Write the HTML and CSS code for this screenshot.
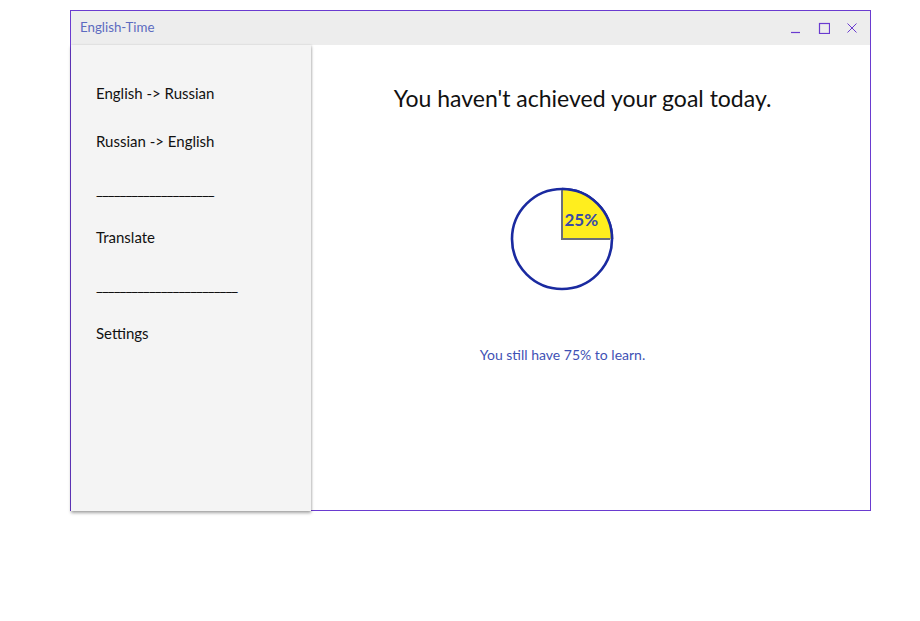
FILE: index.html
```html
<!DOCTYPE html>
<html>
<head>
<meta charset="utf-8">
<link rel="stylesheet" href="styles.css">
</head>
<body>
<div class="window">
  <div class="titlebar">
    <span class="title">English-Time</span>
    <div class="controls">
      <svg class="ctl" width="12" height="12" viewBox="0 0 12 12"><path d="M1 10.5 H10" stroke="#6a3bd0" stroke-width="1.2"/></svg>
      <svg class="ctl" width="12" height="12" viewBox="0 0 12 12"><rect x="1.5" y="1.5" width="10" height="10" fill="none" stroke="#6a3bd0" stroke-width="1.2"/></svg>
      <svg class="ctl" width="12" height="12" viewBox="0 0 12 12"><path d="M1.5 1.5 L10.5 10.5 M10.5 1.5 L1.5 10.5" stroke="#6a3bd0" stroke-width="1"/></svg>
    </div>
  </div>
  <div class="body">
    <nav class="sidebar">
      <div class="item">English -&gt; Russian</div>
      <div class="item">Russian -&gt; English</div>
      <div class="item sep">____________________</div>
      <div class="item">Translate</div>
      <div class="item sep">________________________</div>
      <div class="item">Settings</div>
    </nav>
    <main class="content">
      <h1 class="heading">You haven't achieved your goal today.</h1>
      <div class="pie">
        <svg width="106" height="106" viewBox="0 0 106 106">
          <circle cx="52" cy="53" r="50" fill="#fff" stroke="#1a2aa0" stroke-width="2.6"/>
          <path d="M52 53 L52 3 A50 50 0 0 1 102 53 Z" fill="#ffee1e"/>
          <path d="M52 4 L52 53 L100 53" fill="none" stroke="#6b6f7a" stroke-width="2"/>
          <path d="M52 3 A50 50 0 0 1 102 53" fill="none" stroke="#1a2aa0" stroke-width="2.6"/>
        </svg>
        <span class="pct">25%</span>
      </div>
      <p class="note">You still have 75% to learn.</p>
    </main>
  </div>
</div>
</body>
</html>
```
FILE: styles.css
```css
* { box-sizing: border-box; }
html, body { margin: 0; padding: 0; background: #fff; }
body { font-family: "Lato", "Open Sans", sans-serif; min-height: 621px; padding-top: 10px; }

.window {
  margin: 0 0 0 70px;
  width: 801px;
  height: 501px;
  border: 1px solid #6a3bd0;
  display: flex;
  flex-direction: column;
}

.titlebar {
  height: 34px;
  background: #ededed;
  display: flex;
  align-items: center;
  justify-content: space-between;
  padding: 0 12px 2px 9px;
  flex-shrink: 0;
}
.title { color: #5c6bc0; font-size: 13.3px; }
.controls { display: flex; gap: 16px; align-items: center; padding-top: 2px; }
.ctl { display: block; }

.body {
  flex: none;
  height: 466px;
  display: flex;
  align-items: flex-start;
}

.sidebar {
  width: 240px;
  height: 466px;
  background: #f4f4f4;
  box-shadow: 0 2px 3px rgba(0,0,0,0.35), 1px 0 2px rgba(0,0,0,0.1);
  padding: 38px 0 0 25px;
  display: flex;
  flex-direction: column;
  gap: 27px;
  position: relative;
  z-index: 2;
}
.item { font-size: 15px; color: #111; height: 21px; line-height: 21px; white-space: nowrap; }
.sep { letter-spacing: -1px; }

.content {
  flex: 1;
  display: flex;
  flex-direction: column;
  align-items: center;
  padding-right: 56px;
  height: 465px;
}
.heading {
  margin: 38px 0 0 40px;
  font-size: 23px;
  font-weight: normal;
  color: #111;
  line-height: 30px;
}
.pie { position: relative; margin-top: 73px; width: 106px; height: 106px; }
.pie svg { display: block; }
.pct {
  position: absolute;
  left: 55px;
  top: 23px;
  font-size: 17px;
  font-weight: bold;
  color: #3a4aa8;
}
.note {
  margin: 54px 0 0 0;
  font-size: 14px;
  color: #3f51b5;
}
```
